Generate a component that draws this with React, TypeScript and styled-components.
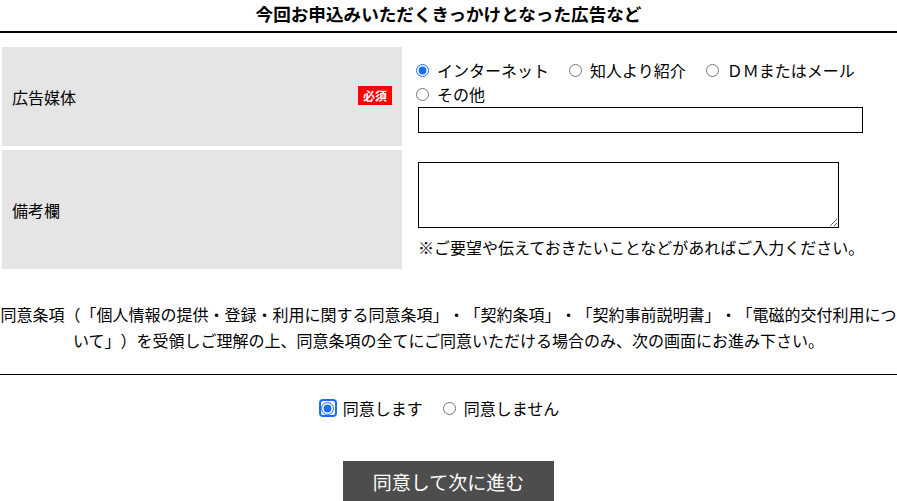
import styled, { createGlobalStyle } from "styled-components";

const GlobalStyle = createGlobalStyle`
    body {
        margin: 0;
        background: #fff;
        color: #000;
        font-family: "Noto Sans CJK JP", "Noto Sans", sans-serif;
        font-size: 16px;
        text-spacing-trim: space-all;
        font-feature-settings: "fwid" 0;
    }
`

const mediaOptions = ['インターネット', '知人より紹介', 'ＤＭまたはメール', 'その他']

export default function App() {
    return (
        <Page>
            <GlobalStyle/>
            <Title>今回お申込みいただくきっかけとなった広告など</Title>
            <FormTable>
                <Row>
                    <LabelCell $height={99}>
                        広告媒体
                        <Required>必須</Required>
                    </LabelCell>
                    <FieldCell $top={11}>
                        <Options>
                            {mediaOptions.map((o, i) => (
                                <Option key={o}>
                                    <Radio type="radio" name="media" defaultChecked={i === 0}/>
                                    {o}
                                </Option>
                            ))}
                        </Options>
                        <TextInput type="text"/>
                    </FieldCell>
                </Row>
                <Row>
                    <LabelCell $height={119}>備考欄</LabelCell>
                    <FieldCell $top={12}>
                        <TextArea/>
                        <Note>※ご要望や伝えておきたいことなどがあればご入力ください。</Note>
                    </FieldCell>
                </Row>
            </FormTable>
            <Agreement>
                同意条項（「個人情報の提供・登録・利用に関する同意条項」・「契約条項」・「契約事前説明書」・「電磁的交付利用について」）を受領しご理解の上、同意条項の全てにご同意いただける場合のみ、次の画面にお進み下さい。
            </Agreement>
            <Divider/>
            <ConsentRow>
                <Option>
                    <FocusRing>
                        <Radio type="radio" name="agree" defaultChecked/>
                    </FocusRing>
                    同意します
                </Option>
                <Option>
                    <Radio type="radio" name="agree"/>
                    同意しません
                </Option>
            </ConsentRow>
            <ButtonWrap>
                <SubmitButton>同意して次に進む</SubmitButton>
            </ButtonWrap>
        </Page>
    )
}

const Page = styled.main`
    width: 897px;
`

const Title = styled.h2`
    margin: 0;
    font-size: 17.6px;
    font-weight: 700;
    line-height: 28px;
    text-align: center;
    padding-bottom: 3px;
    border-bottom: 2px solid #000;
`

const FormTable = styled.section`
    display: flex;
    flex-direction: column;
    gap: 4px;
    margin-top: 14px;
    padding-left: 2px;
`

const Row = styled.div`
    display: flex;
    align-items: stretch;
`

const LabelCell = styled.div<{ $height: number }>`
    width: 400px;
    height: ${p => p.$height}px;
    box-sizing: border-box;
    background: #e5e5e5;
    display: flex;
    align-items: center;
    justify-content: space-between;
    padding: 0 10px;
    line-height: 24px;
`

const Required = styled.span`
    background: #ff0000;
    color: #fff;
    font-size: 12px;
    font-weight: 700;
    line-height: 19px;
    padding: 0 5px;
    margin-top: -3px;
`

const FieldCell = styled.div<{ $top: number }>`
    flex: 1;
    display: flex;
    flex-direction: column;
    padding: ${p => p.$top}px 0 0 14px;
`

const Options = styled.div`
    display: flex;
    flex-wrap: wrap;
    column-gap: 20px;
    line-height: 24px;
`

const Option = styled.label`
    display: inline-flex;
    align-items: center;
    line-height: 24px;
    font-size: 16px;
`

const Radio = styled.input`
    width: 13px;
    height: 13px;
    margin: 0 8px 0 0;
    accent-color: #1a6ef5;
`

const FocusRing = styled.span`
    display: inline-flex;
    align-items: center;
    justify-content: center;
    width: 14px;
    height: 14px;
    border: 2px solid #1a6ef5;
    border-radius: 4px;
    margin: 0 6px 0 -3px;
    & > input {
        margin: 0;
    }
`

const TextInput = styled.input`
    width: 445px;
    height: 26px;
    box-sizing: border-box;
    margin: 1px 0 0 2px;
    border: 1px solid #000;
    padding: 2px 4px;
    font-size: 16px;
    outline: none;
`

const TextArea = styled.textarea`
    display: block;
    width: 421px;
    height: 66px;
    box-sizing: border-box;
    margin: 0 0 7px 2px;
    border: 1px solid #000;
    font-size: 16px;
    padding: 2px;
`

const Note = styled.p`
    margin: 0 0 0 2px;
    line-height: 24px;
`

const Agreement = styled.p`
    margin: 32px 0 0;
    text-align: center;
    line-height: 26px;
`

const Divider = styled.hr`
    margin: 21px 0 0;
    border: none;
    border-top: 1px solid #000;
`

const ConsentRow = styled.div`
    display: flex;
    justify-content: center;
    gap: 20px;
    margin-top: 21px;
    padding-right: 16px;
`

const ButtonWrap = styled.div`
    display: flex;
    justify-content: center;
    margin-top: 41px;
`

const SubmitButton = styled.button`
    width: 211px;
    height: 40px;
    border: none;
    background: #4d4d4d;
    color: #fff;
    font-family: "Noto Sans CJK JP", sans-serif;
    font-size: 19px;
    padding: 0;
    cursor: pointer;
`
